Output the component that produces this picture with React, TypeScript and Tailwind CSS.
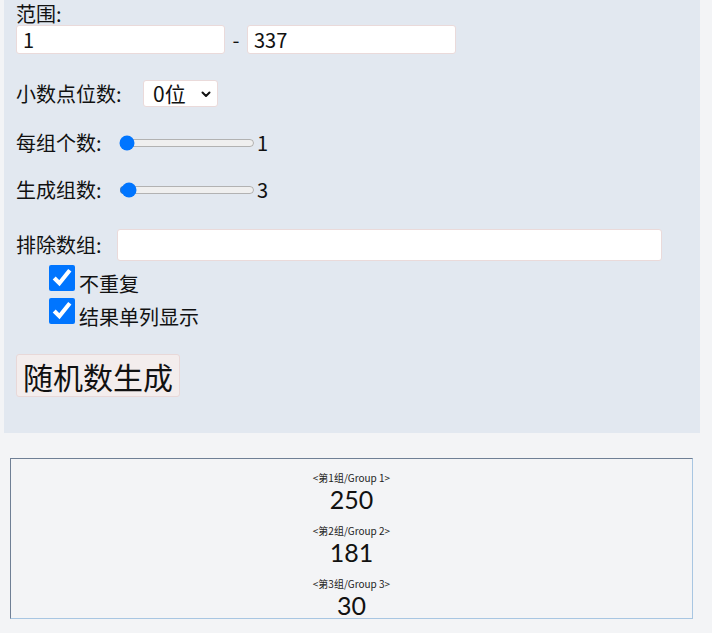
import React from "react";

const font = { fontFamily: '"Noto Sans CJK SC", "Noto Sans", sans-serif' };

export default function App() {
  const groups = [
    { label: "<第1组/Group 1>", value: "250" },
    { label: "<第2组/Group 2>", value: "181" },
    { label: "<第3组/Group 3>", value: "30" },
  ];
  return (
    <div className="min-h-[633px] w-[712px] bg-[#f3f4f6] text-[#111] overflow-hidden" style={font}>
      <div className="ml-[4px] w-[696px] h-[433px] bg-[#e2e8f0] pl-[12px] flex flex-col text-[20px]">
        <div className="h-[25px] leading-[25px] pt-[1px]">范围:</div>
        <div className="flex items-center h-[29px]">
          <input
            defaultValue="1"
            className="w-[209px] h-[29px] bg-white border border-[#eadada] rounded-[3px] px-[6px] text-[20px] leading-[27px] outline-none"
          />
          <span className="mx-[7px] w-[8px] text-center">-</span>
          <input
            defaultValue="337"
            className="w-[209px] h-[29px] bg-white border border-[#eadada] rounded-[3px] px-[6px] text-[20px] leading-[27px] outline-none"
          />
        </div>
        <div className="flex items-center h-[27px] mt-[26px]">
          <span className="w-[127px] shrink-0">小数点位数:</span>
          <div
            role="combobox"
            className="w-[75px] h-[27px] bg-white border border-[#eadada] rounded-[3px] pl-[9px] pr-[6px] flex items-center justify-between"
          >
            <span className="text-[21px] leading-[25px]">0位</span>
            <svg width="10" height="7" viewBox="0 0 10 7" className="mt-[1px]">
              <path d="M1.5 1.5 L5 5 L8.5 1.5" fill="none" stroke="#111" strokeWidth="2" strokeLinecap="round" strokeLinejoin="round" />
            </svg>
          </div>
        </div>
        <div className="flex items-center h-[24px] mt-[24px]">
          <span className="w-[103px] shrink-0">每组个数:</span>
          <input type="range" min={1} max={100} defaultValue={1} className="w-[136px] m-0" />
          <span className="ml-[2px]">1</span>
        </div>
        <div className="flex items-center h-[24px] mt-[23px]">
          <span className="w-[103px] shrink-0">生成组数:</span>
          <input type="range" min={1} max={100} defaultValue={3} className="w-[136px] m-0" />
          <span className="ml-[2px]">3</span>
        </div>
        <div className="flex items-center h-[32px] mt-[27px]">
          <span className="w-[101px] shrink-0">排除数组:</span>
          <input className="w-[545px] h-[32px] bg-white border border-[#eadada] rounded-[3px] px-[4px] text-[20px] outline-none" />
        </div>
        <label className="flex items-end h-[26px] mt-[4px] pl-[33px]">
          <input type="checkbox" defaultChecked className="w-[26px] h-[26px] m-0 shrink-0" />
          <span className="ml-[4px] leading-[22px] translate-y-[4px]">不重复</span>
        </label>
        <label className="flex items-end h-[26px] mt-[7px] pl-[33px]">
          <input type="checkbox" defaultChecked className="w-[26px] h-[26px] m-0 shrink-0" />
          <span className="ml-[4px] leading-[22px] translate-y-[4px]">结果单列显示</span>
        </label>
        <div className="mt-[30px]">
          <button className="h-[43px] px-[6px] bg-[#f3eded] border border-[#e8d8d8] rounded-[3px] text-[30px] leading-[38px]">
            随机数生成
          </button>
        </div>
      </div>
      <div className="mt-[25px] ml-[10px] w-[683px] h-[161px] bg-[#f3f4f6] border border-t-[#6f7f95] border-l-[#6f7f95] border-r-[#a8c6e2] border-b-[#a8c6e2] overflow-hidden pt-[12px] flex flex-col items-center">
        {groups.map((g) => (
          <div key={g.label} className="flex flex-col items-center h-[53px] shrink-0">
            <div className="text-[10px] leading-[14px] text-[#222]">{g.label}</div>
            <div
              className="text-[25px] leading-[26px] mt-[1px] text-[#111]"
              style={{ fontFamily: 'Lato, "Noto Sans", sans-serif' }}
            >
              {g.value}
            </div>
          </div>
        ))}
      </div>
    </div>
  );
}
